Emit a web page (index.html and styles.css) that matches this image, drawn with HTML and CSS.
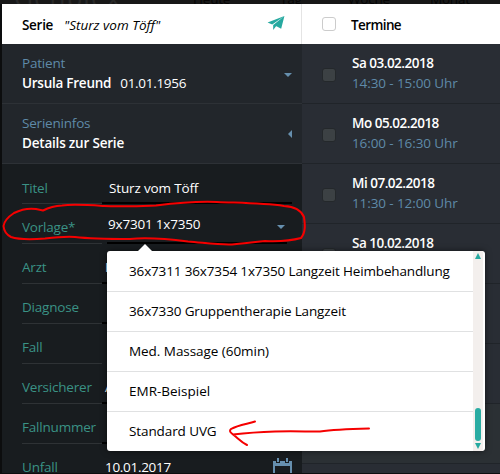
FILE: index.html
```html
<!DOCTYPE html>
<html lang="de">
<head>
<meta charset="utf-8">
<title>Serie</title>
<link rel="stylesheet" href="styles.css">
</head>
<body>
<div class="backdrop"><span class="logo">Genplex</span><span class="nav n1">Heute</span><span class="nav n2">Tag</span><span class="nav n3">Woche</span><span class="nav n4">Monat</span></div>
<main class="app">
  <section class="series">
    <header class="head">
      <b class="t-serie">Serie</b><i class="t-name">"Sturz vom Töff"</i>
      <svg class="plane" viewBox="0 0 18 16"><path d="M18 0L0 7l5 2z M18 0L6 9.500v5.500l2.600-3.600z M18 0L8 10l6.500 3.600z" fill="#26a9a0"/></svg>
    </header>
    <div class="block">
      <div class="cap t-patient">Patient</div>
      <div class="line"><b class="t-ursula">Ursula Freund</b><span class="t-birth">01.01.1956</span></div>
      <svg class="caret down" viewBox="0 0 8 4"><path d="M0 0h8L4 4z"/></svg>
    </div>
    <div class="block">
      <div class="cap t-infos">Serieninfos</div>
      <div class="line"><b class="t-details">Details zur Serie</b></div>
      <svg class="caret left" viewBox="0 0 4 8"><path d="M4 0v8L0 4z"/></svg>
    </div>
    <div class="form">
      <div class="field first"><label>Titel</label><div class="val wide"><span class="t-title">Sturz vom Töff</span></div></div>
      <div class="field"><label>Vorlage*</label><div class="val select"><span class="t-vorlage">9x7301 1x7350</span><svg class="caret sel" viewBox="0 0 8 4"><path d="M0 0h8L4 4z"/></svg></div></div>
      <div class="field"><label>Arzt</label><div class="val">H</div></div>
      <div class="field"><label>Diagnose</label><div class="val"></div></div>
      <div class="field"><label>Fall</label><div class="val none"></div></div>
      <div class="field"><label>Versicherer</label><div class="val">A</div></div>
      <div class="field"><label>Fallnummer</label><div class="val"></div></div>
      <div class="field"><label>Unfall</label><div class="val"><span class="t-unfall">10.01.2017</span><svg class="cal" viewBox="0 0 19 18"><path fill="#668fae" fill-rule="evenodd" d="M0 3h3v2h4V3h5v2h4V3h3v15H0z M2 8v10h15V8z M4 0h2v4H4z M13 0h2v4h-2z"/></svg></div></div>
    </div>
  </section>
  <section class="dates">
    <header class="head dhead"><i class="box light"></i><b class="t-termine">Termine</b></header>
    <div class="date"><i class="box"></i><div><b>Sa 03.02.2018</b><span>14:30 - 15:00 Uhr</span></div></div>
    <div class="date"><i class="box"></i><div><b>Mo 05.02.2018</b><span>16:00 - 16:30 Uhr</span></div></div>
    <div class="date"><i class="box"></i><div><b>Mi 07.02.2018</b><span>11:30 - 12:00 Uhr</span></div></div>
    <div class="date"><i class="box"></i><div><b>Sa 10.02.2018</b></div></div>
    <div class="date"></div>
    <div class="date"></div>
    <div class="date alt"></div>
    <div class="date"></div>
  </section>
</main>
<div class="popup">
  <ul>
    <li><span>36x7311 36x7354 1x7350 Langzeit Heimbehandlung</span></li>
    <li><span>36x7330 Gruppentherapie Langzeit</span></li>
    <li class="o3"><span>Med. Massage (60min)</span></li>
    <li class="o4"><span>EMR-Beispiel</span></li>
    <li class="o5"><span>Standard UVG</span></li>
  </ul>
  <div class="scroll"><svg viewBox="0 0 6 6"><path d="M3 0l3 6H0z"/></svg><div class="thumb"></div><svg viewBox="0 0 6 6"><path d="M0 0h6L3 6z"/></svg></div>
</div>
<svg class="marks" viewBox="0 0 500 474">
  <path d="M43 210.500L36 209C29 208 20 210 14 213C8 217 4 222 3.500 226C4 231 7 235 11 237C20 240 32 239.500 45 238.500C58 237 66 236.500 75 237C92 239 110 239 130 239C150 237 168 239 188 241.500C206 243 219 245 232 244.500C245 243 255 242 265 241C277 241.500 290 241 301 238C306 232 305 224 304 217C301 210 294 206.500 284 206C263 203 240 203 217 202C194 201 176 203 156 205.500C137 206 121 207 104 206C88 205 73 204 62 205.500C53 206 48 208 43 210.500"/>
  <path d="M255 421.500C247 424 238 425 231 429C229 431 230 432 233 434.500C238 438 241 442 247 445M233 434.500C246 433 260 432 275 431.500C290 431 305 431.500 320 431.500C334 429.500 350 429 369 428.500"/>
</svg>
</body>
</html>
```
FILE: styles.css
```css
* { box-sizing: border-box; }
body { margin: 0; width: 500px; height: 474px; overflow: hidden; position: relative; background: #0c0d0e; font: 13.5px/20px "Open Sans", "Noto Sans", sans-serif; letter-spacing: -0.2px; color: #fff; white-space: nowrap; }
b { font-weight: 600; }
.backdrop { height: 4px; overflow: hidden; position: relative; background: #181818; color: #050505; }
.backdrop span { position: absolute; top: -11px; }
.backdrop .logo { left: 14px; top: -13px; font-size: 26px; letter-spacing: 1px; color: #282828; }
.n1 { left: 193px; } .n2 { left: 280px; } .n3 { left: 348px; } .n4 { left: 430px; }
.app { display: grid; grid-template-columns: 300px 198px; margin-left: 2px; height: 469px; overflow: hidden; }
.series { background: #181c1f; }
.head { height: 40px; display: flex; align-items: center; background: #fff; color: #000; padding: 2px 16px 0 20px; border-right: 1px solid #e4e4e4; }
.t-serie { letter-spacing: -0.3px; }
.t-name { margin-left: 11px; letter-spacing: 0; }
.t-ursula { letter-spacing: -0.25px; }
.t-birth { letter-spacing: -0.3px; }
.t-termine { letter-spacing: -0.6px; }
.plane { width: 18px; height: 15px; margin-left: auto; margin-top: -3px; }
.block { position: relative; height: 60px; background: #22262b; border-bottom: 1px solid #2d3136; padding: 9px 20px 0; }
.cap { color: #5f8aa8; }
.line { display: flex; gap: 9px; }
.caret { fill: #668fae; }
.down { position: absolute; right: 10px; top: 29px; width: 8px; height: 4px; }
.left { position: absolute; right: 10px; top: 26px; width: 4px; height: 8px; }
.field { height: 40px; display: grid; grid-template-columns: 80px 190px; padding-left: 20px; }
.first { height: 38px; }
label { color: #3a9285; border-bottom: 1px solid #2e3235; padding-top: 15px; }
.first label { padding-top: 14px; }
.val { height: 42px; border-bottom: 2px solid #000; padding: 15px 0 0 3px; display: flex; align-items: flex-start; }
.first .val { height: 40px; padding: 14px 0 0 7px; }
.t-title { letter-spacing: -0.15px; }
.select { margin: 0 5px; padding: 12px 0 0 1px; }
.sel { width: 8px; height: 4px; margin: 11px 2px 0 auto; }
.none { border: 0; }
.t-unfall { letter-spacing: -0.3px; }
.cal { width: 19px; height: 18px; margin: 1px 0 0 auto; }
.dates { background: #292d34; }
.dhead { padding: 2px 0 0 20px; border: 0; gap: 15px; }
.date { height: 60px; border-bottom: 1px solid #202429; display: flex; padding: 9px 0 0 20px; gap: 16px; }
.date b, .date span { display: block; }
.date b { letter-spacing: -0.5px; }
.date span { color: #5f8aa8; letter-spacing: -0.1px; }
.alt { background: #2b3034; }
.box { width: 14px; height: 14px; border-radius: 3px; background: #3c4144; border: 1px solid #24282b; margin-top: 15px; flex: none; }
.light { background: #fff; border-color: #ccc; margin-top: -2px; }
.popup { position: absolute; left: 107px; top: 251px; width: 378px; height: 200px; background: #fff; color: #000; border-radius: 3px; display: flex; box-shadow: 0 0 6px #0008; }
.popup::before { content: ""; position: absolute; left: 31px; top: -7px; border: 7px solid transparent; border-top: 0; border-bottom-color: #fff; }
ul { list-style: none; margin: 0; padding: 0; width: 366px; }
li { height: 40px; padding: 9px 0 0 22px; border-bottom: 1px solid #e0e1e2; letter-spacing: -0.15px; }
li:first-child { height: 41px; padding-top: 10px; }
li:last-child { border: 0; height: 39px; }
.o3 { letter-spacing: -0.05px; }
.o4 { letter-spacing: 0; }
.o5 { letter-spacing: -0.1px; }
.scroll { width: 10px; background: #f3efed; display: flex; flex-direction: column; align-items: center; padding: 2px 0; fill: #26a9a0; }
.scroll svg { width: 6px; height: 6px; flex: none; }
.thumb { width: 6px; height: 33px; border-radius: 3px; background: #2aaca3; margin: auto 0 2px; }
.marks { position: absolute; left: 0; top: 0; width: 500px; height: 474px; fill: none; stroke: #f50000; stroke-width: 2; stroke-linecap: round; stroke-linejoin: round; }
```
